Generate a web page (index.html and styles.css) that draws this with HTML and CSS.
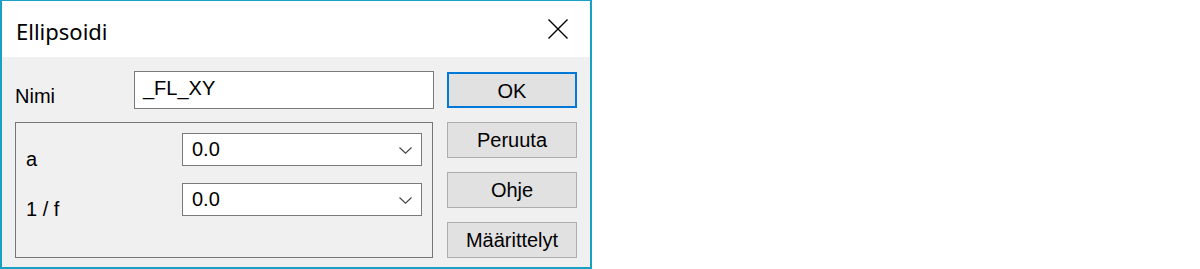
FILE: index.html
```html
<!DOCTYPE html>
<html lang="fi">
<head>
<meta charset="utf-8">
<title>Ellipsoidi</title>
<link rel="stylesheet" href="styles.css">
</head>
<body>
<div class="window">
  <div class="titlebar">
    <span class="title">Ellipsoidi</span>
    <svg class="close" width="20" height="20" viewBox="0 0 20 20" aria-label="Sulje">
      <path d="M0.5 0.5 L19.5 19.5 M19.5 0.5 L0.5 19.5" stroke="#000" stroke-width="1.4" fill="none"/>
    </svg>
  </div>
  <div class="content">
    <div class="left">
      <div class="name-row">
        <span class="label name-label">Nimi</span>
        <div class="input">_FL_XY</div>
      </div>
      <div class="group">
        <span class="label row-label">a</span>
        <div class="combo">
          <span>0.0</span>
          <svg class="chev" width="13" height="7" viewBox="0 0 13 7"><path d="M0.5 0.5 L6.5 6.2 L12.5 0.5" stroke="#444" stroke-width="1.1" fill="none"/></svg>
        </div>
        <span class="label row-label">1 / f</span>
        <div class="combo">
          <span>0.0</span>
          <svg class="chev" width="13" height="7" viewBox="0 0 13 7"><path d="M0.5 0.5 L6.5 6.2 L12.5 0.5" stroke="#444" stroke-width="1.1" fill="none"/></svg>
        </div>
      </div>
    </div>
    <div class="buttons">
      <div class="btn btn-default">OK</div>
      <div class="btn">Peruuta</div>
      <div class="btn">Ohje</div>
      <div class="btn">Määrittelyt</div>
    </div>
  </div>
</div>
</body>
</html>
```

FILE: styles.css
```css
html, body {
  margin: 0;
  padding: 0;
  background: #ffffff;
}

.window {
  width: 592px;
  height: 269px;
  box-sizing: border-box;
  border: 2px solid #19a1c4;
  border-top-width: 1px;
  display: flex;
  flex-direction: column;
  font-family: "Liberation Sans", Arial, sans-serif;
  font-size: 20px;
  line-height: 23px;
  color: #000;
}

.titlebar {
  height: 56px;
  flex: none;
  background: #ffffff;
  display: flex;
  justify-content: space-between;
  align-items: flex-start;
  padding: 0 22px 0 14px;
}

.title {
  font-family: "Noto Sans", "Open Sans", sans-serif;
  font-size: 22px;
  line-height: 30px;
  padding-top: 15px;
}

.close {
  margin-top: 18px;
  display: block;
}

.content {
  flex: 1;
  background: #f0f0f0;
  display: flex;
  padding: 14px 0 0 13px;
}

.left {
  width: 419px;
  display: flex;
  flex-direction: column;
}

.name-row {
  display: flex;
  height: 38px;
}

.name-label {
  width: 119px;
  padding-top: 14px;
}

.input {
  width: 300px;
  height: 38px;
  box-sizing: border-box;
  border: 1px solid #7a7a7a;
  background: #ffffff;
  padding: 5px 8px 0;
}

.group {
  margin-top: 13px;
  width: 418px;
  height: 136px;
  box-sizing: border-box;
  border: 1px solid #767676;
  padding: 10px 9px 0 10px;
  display: grid;
  grid-template-columns: 156px 240px;
  grid-auto-rows: 33px;
  row-gap: 17px;
}

.row-label {
  padding-top: 15px;
  white-space: pre;
}

.combo {
  height: 33px;
  box-sizing: border-box;
  border: 1px solid #7a7a7a;
  background: #ffffff;
  display: flex;
  align-items: center;
  padding: 0 9px;
}

.chev {
  margin-left: auto;
  display: block;
  margin-top: 1px;
}

.buttons {
  margin-left: 13px;
  margin-top: 1px;
  width: 130px;
  display: flex;
  flex-direction: column;
  gap: 14px;
}

.btn {
  height: 36px;
  box-sizing: border-box;
  background: #e1e1e1;
  border: 1px solid #adadad;
  display: flex;
  align-items: center;
  justify-content: center;
}

.btn-default {
  border: 2px solid #0078d7;
  padding-top: 2px;
}
```
